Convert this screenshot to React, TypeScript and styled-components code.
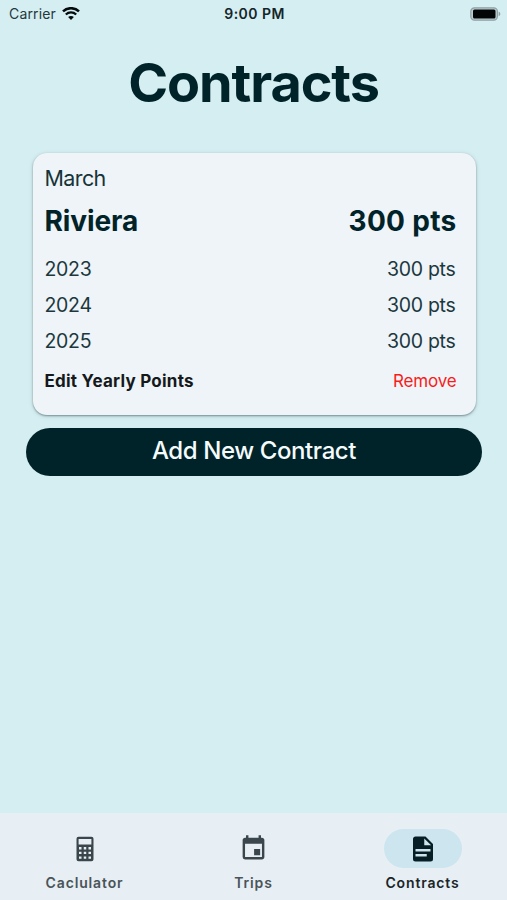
import React from "react";
import styled, { createGlobalStyle } from "styled-components";

const GlobalStyle = createGlobalStyle`
  * { box-sizing: border-box; }
  body { margin: 0; background: #d5eef2; font-family: Inter, sans-serif; }
`;

const Screen = styled.div`
  display: flex;
  flex-direction: column;
  width: 507px;
  height: 900px;
  background: #d5eef2;
  color: #00232a;
  overflow: hidden;
  white-space: nowrap;
`;

const StatusBar = styled.header`
  display: grid;
  grid-template-columns: 1fr auto 1fr;
  align-items: center;
  height: 28px;
  padding: 0 7px 0 9px;
  font-size: 14px;
  line-height: 28px;
`;

const Carrier = styled.div`
  display: flex;
  align-items: center;
  gap: 6px;
  color: #24383c;
  letter-spacing: 0.15px;
`;

const Clock = styled.div`
  font-weight: 600;
  color: #142529;
  letter-spacing: 0.45px;
`;

const BatterySlot = styled.div`
  display: flex;
  justify-content: flex-end;
  margin-right: -1px;
`;

const Title = styled.h1`
  margin: 20px 0 0;
  height: 70px;
  line-height: 70px;
  font-size: 54px;
  font-weight: 700;
  letter-spacing: -1.1px;
  text-align: center;
`;

const Card = styled.section`
  margin: 35px 31.5px 0 32.5px;
  height: 262px;
  padding: 7px 19px 0 12px;
  border-radius: 14px;
  background: #eef4f7;
  box-shadow: 0 1px 2px rgba(0, 30, 36, 0.4), 0 1px 5px rgba(0, 30, 36, 0.13);
`;

const Month = styled.div`
  height: 36px;
  line-height: 36px;
  font-size: 21.5px;
  letter-spacing: -0.6px;
  color: #17333a;
`;

const Heading = styled.div`
  display: flex;
  justify-content: space-between;
  height: 54px;
  line-height: 50px;
  font-size: 28px;
  font-weight: 700;
`;

const ResortName = styled.span`
  letter-spacing: -0.1px;
`;

const TotalPoints = styled.span`
  letter-spacing: 0.3px;
`;

const YearRow = styled.div`
  display: flex;
  justify-content: space-between;
  height: 36px;
  padding-right: 1px;
  line-height: 38px;
  font-size: 19.5px;
  letter-spacing: -0.3px;
  color: #1c383e;
`;

const Actions = styled.div`
  display: flex;
  justify-content: space-between;
  height: 46px;
`;

const Action = styled.button<{ $danger?: boolean }>`
  padding: 0;
  border: 0;
  background: none;
  font: ${(p) => (p.$danger ? 400 : 700)} 17px/45px Inter, sans-serif;
  letter-spacing: ${(p) => (p.$danger ? "-0.15px" : "0.24px")};
  color: ${(p) => (p.$danger ? "#f81c1c" : "#15191c")};
`;

const AddButton = styled.button`
  margin: 13px 25px 0 26px;
  height: 48px;
  padding: 0 0 2px;
  border: 0;
  border-radius: 24px;
  background: #00232a;
  color: #f5fbfc;
  font: 500 24px/46px Inter, sans-serif;
  letter-spacing: -0.4px;
`;

const TabBar = styled.nav`
  display: grid;
  grid-template-columns: repeat(3, 1fr);
  height: 87px;
  margin-top: auto;
  padding-top: 16px;
  background: #e7eff4;
`;

const Tab = styled.div<{ $active?: boolean }>`
  display: flex;
  flex-direction: column;
  align-items: center;
  gap: 5px;
  font-size: 14px;
  font-weight: 600;
  line-height: 20px;
  letter-spacing: 0.85px;
  color: ${(p) => (p.$active ? "#1b2529" : "#4a5458")};
`;

const Indicator = styled.div<{ $active?: boolean }>`
  display: grid;
  place-items: center;
  width: 78px;
  height: 39px;
  border-radius: 20px;
  background: ${(p) => (p.$active ? "#cce5ef" : "transparent")};
  color: ${(p) => (p.$active ? "#061e26" : "#3a464b")};
`;

const WifiIcon = () => (
  <svg width="18" height="14" viewBox="0 0 18 14" fill="none" stroke="#050b0d">
    <path d="M1 4.4C5.5.1 12.5.1 17 4.4" strokeWidth="2.5" />
    <path d="M3.8 7.5c3-2.8 7.4-2.8 10.4 0" strokeWidth="2.3" />
    <path d="M6.1 10.1c1.600-1.600 4.200-1.600 5.800 0L9 13z" fill="#050b0d" stroke="none" />
  </svg>
);

const BatteryIcon = () => (
  <svg width="31" height="14" viewBox="0 0 31 14">
    <rect x="0.8" y="0.8" width="26.6" height="12.4" rx="3.6" fill="#bccdd1" stroke="#8fa0a4" strokeWidth="1.2" />
    <rect x="3" y="2.6" width="22.5" height="8.8" rx="1.5" fill="#020405" />
    <path d="M28.6 4.8c2.3.5 2.3 3.9 0 4.4z" fill="#8fa0a4" />
  </svg>
);

const CalculatorIcon = () => (
  <svg width="18" height="26" viewBox="0 0 18 26" fill="currentColor">
    <path
      fillRule="evenodd"
      d="M2.500.8h13a2 2 0 0 1 2 2v20.400a2 2 0 0 1-2 2h-13a2 2 0 0 1-2-2V2.800a2 2 0 0 1 2-2zM2.600 3v5.600h12.800V3zM3 11v2.400h2.500v-2.400zM7.750 11v2.400h2.500v-2.400zM12.500 11v2.400h2.500v-2.400zM3 15.700v2.400h2.500v-2.400zM7.750 15.700v2.400h2.500v-2.400zM12.500 15.700v2.400h2.500v-2.400zM3 20.400v2.400h2.500v-2.400zM7.750 20.400v2.400h2.500v-2.400zM12.500 20.400v2.400h2.500v-2.400z"
    />
  </svg>
);

const CalendarIcon = () => (
  <svg width="29" height="29" viewBox="0 0 24 24" fill="currentColor">
    <path d="M17.500 12.500h-5v5h5v-5zM16.200 1v2H7.800V1H5.800v2H5c-1.110 0-2 .9-2 2v14a2 2 0 0 0 2 2h14c1.100 0 2-.9 2-2V5c0-1.100-.9-2-2-2h-.800V1h-2zM19 19H5V8h14v11z" />
  </svg>
);

const DocumentIcon = () => (
  <svg width="30" height="30" viewBox="0 0 24 24" fill="currentColor">
    <path d="M13 9h5.500L13 3.500V9M6 2h8l6 6v12a2 2 0 0 1-2 2H6a2 2 0 0 1-2-2V4c0-1.110.89-2 2-2m9 16v-2H6v2h9m3-4v-2H6v2h12z" />
  </svg>
);

const years = [2023, 2024, 2025];
const tabs = [
  { label: "Caclulator", icon: <CalculatorIcon />, active: false },
  { label: "Trips", icon: <CalendarIcon />, active: false },
  { label: "Contracts", icon: <DocumentIcon />, active: true },
];

export default function App() {
  return (
    <Screen>
      <GlobalStyle />
      <StatusBar>
        <Carrier>
          <span>Carrier</span>
          <WifiIcon />
        </Carrier>
        <Clock>9:00 PM</Clock>
        <BatterySlot>
          <BatteryIcon />
        </BatterySlot>
      </StatusBar>
      <Title>Contracts</Title>
      <Card>
        <Month>March</Month>
        <Heading>
          <ResortName>Riviera</ResortName>
          <TotalPoints>300 pts</TotalPoints>
        </Heading>
        {years.map((year) => (
          <YearRow key={year}>
            <span>{year}</span>
            <span>300 pts</span>
          </YearRow>
        ))}
        <Actions>
          <Action>Edit Yearly Points</Action>
          <Action $danger>Remove</Action>
        </Actions>
      </Card>
      <AddButton>Add New Contract</AddButton>
      <TabBar>
        {tabs.map((tab) => (
          <Tab key={tab.label} $active={tab.active}>
            <Indicator $active={tab.active}>{tab.icon}</Indicator>
            <span>{tab.label}</span>
          </Tab>
        ))}
      </TabBar>
    </Screen>
  );
}
